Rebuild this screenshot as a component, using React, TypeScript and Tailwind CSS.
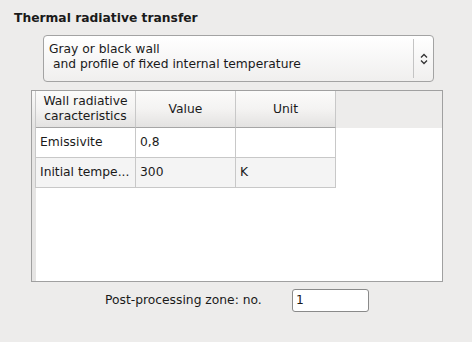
const rows = [
  { name: 'Emissivite', value: '0,8', unit: '' },
  { name: 'Initial tempe...', value: '300', unit: 'K' },
];

export default function App() {
  return (
    <div
      className="w-[472px] h-[342px] bg-[#edeceb] text-[12.3px] text-[#1a1a1a] overflow-hidden"
      style={{ fontFamily: '"DejaVu Sans", sans-serif' }}
    >
      <div className="pl-[14px] pt-[10px] h-[35px] font-bold leading-[17px]">Thermal radiative transfer</div>

      <div className="ml-[43px] w-[391px] h-[47px] rounded-[4px] border border-[#a3a3a3] bg-gradient-to-b from-white to-[#f0efee] flex">
        <div className="flex-1 pl-[5px] pt-[6px] leading-[15px]">
          <div>Gray or black wall</div>
          <div className="whitespace-pre"> and profile of fixed internal temperature</div>
        </div>
        <div className="w-px my-[3px] bg-[#c4c4c4]" />
        <div className="w-[19px] flex items-center justify-center">
          <svg width="8" height="12" viewBox="0 0 8 12" fill="none" stroke="#333" strokeWidth="1.3">
            <path d="M1 4.5 L4 1.5 L7 4.5" />
            <path d="M1 7.5 L4 10.5 L7 7.5" />
          </svg>
        </div>
      </div>

      <div className="ml-[31px] mt-[8px] w-[412px] h-[192px] border border-[#a0a0a0] bg-white flex flex-col">
        <div className="flex h-[37px] bg-[#edeceb]">
          <div className="w-[4px] bg-gradient-to-b from-[#fafaf9] to-[#e4e3e2] border-r border-[#c8c8c8]" />
          {['Wall radiative\ncaracteristics', 'Value', 'Unit'].map((h) => (
            <div
              key={h}
              className="w-[100px] flex items-center justify-center text-center whitespace-pre leading-[15px] bg-gradient-to-b from-[#fbfbfa] via-[#f4f3f2] to-[#e3e2e1] border-r border-[#c8c8c8] border-b border-b-[#a6a6a6]"
            >
              {h}
            </div>
          ))}
        </div>
        {rows.map((r, i) => (
          <div key={r.name} className="flex h-[30px]">
            <div className="w-[4px] bg-[#e6e5e4] border-r border-[#c8c8c8]" />
            {[r.name, r.value, r.unit].map((c, j) => (
              <div
                key={j}
                className={`w-[100px] flex items-center pl-[4px] border-r border-b border-[#c8c8c8] ${i === 1 ? 'bg-[#f4f4f4]' : 'bg-white'}`}
              >
                {c}
              </div>
            ))}
          </div>
        ))}
        <div className="flex flex-1">
          <div className="w-[4px] bg-[#e6e5e4]" />
        </div>
      </div>

      <div className="flex items-center mt-[7px] h-[22px]">
        <div className="ml-[105px] w-[187px]">Post-processing zone: no.</div>
        <div className="w-[77px] h-[23px] rounded-[3px] border border-[#8a8a8a] bg-white pl-[3px] flex items-center">1</div>
      </div>
    </div>
  );
}
